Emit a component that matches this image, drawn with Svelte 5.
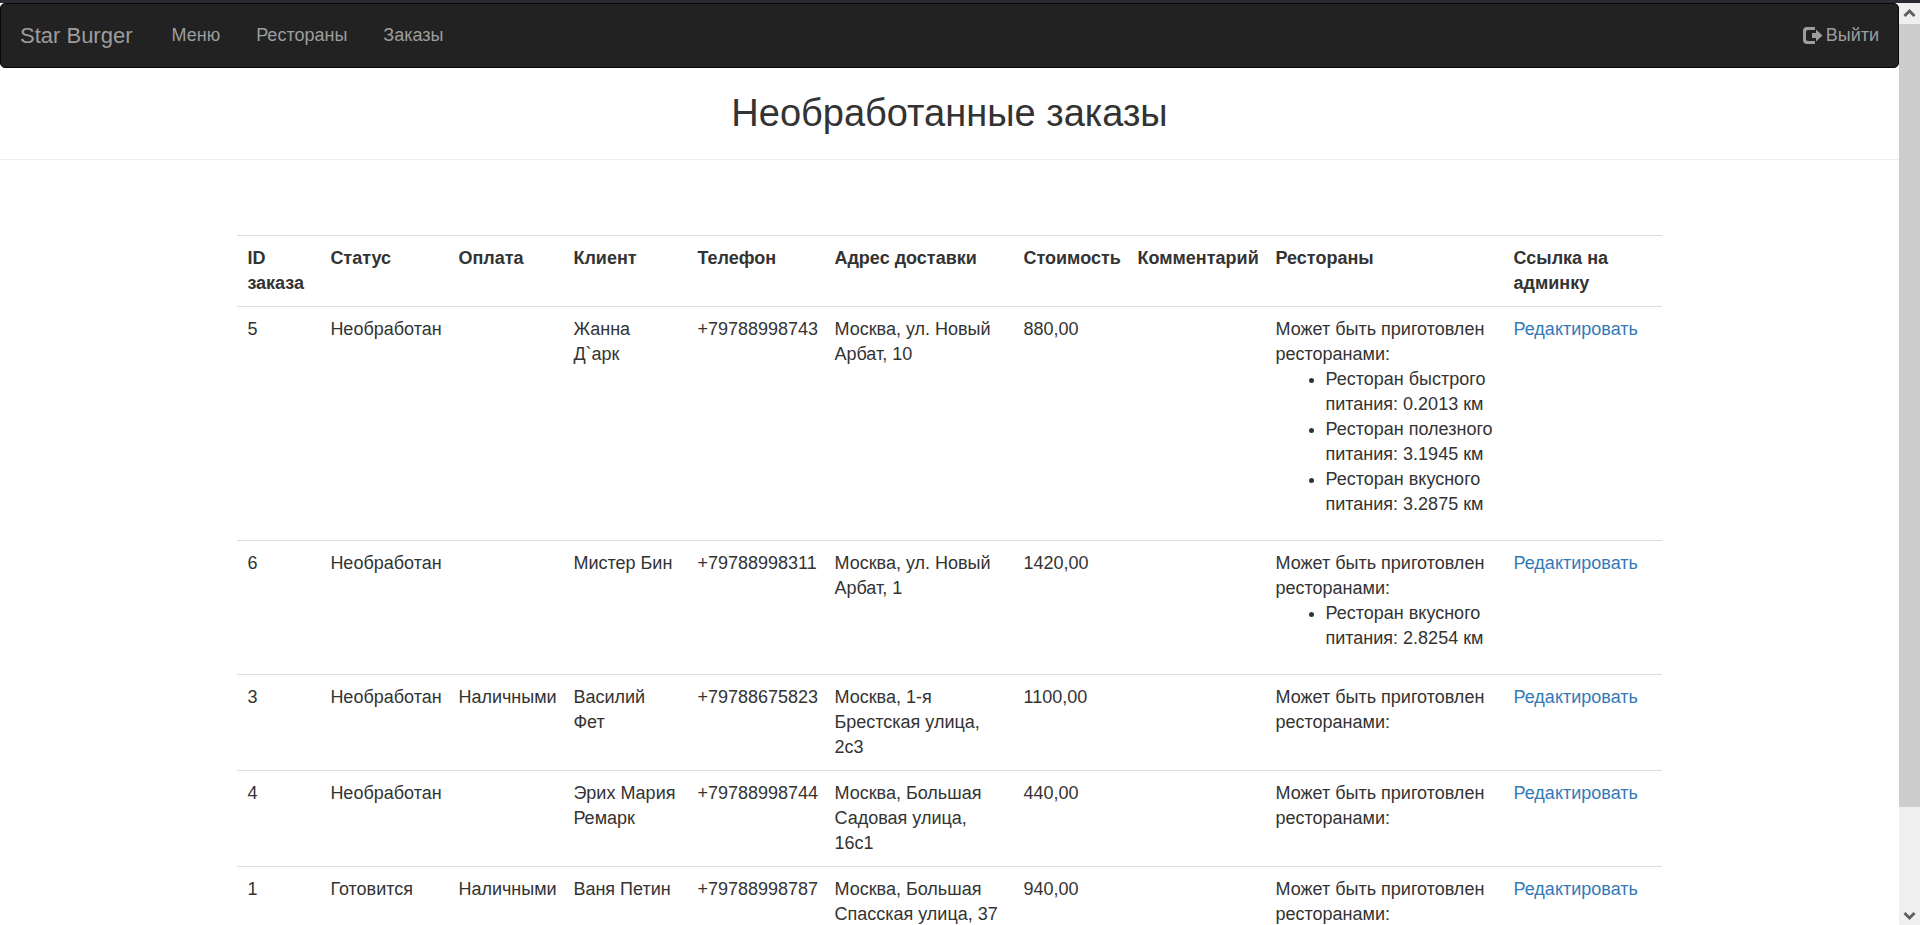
<script>
  const menu = ['Меню', 'Рестораны', 'Заказы'];

  const columns = [
    { title: 'ID заказа', width: 83 },
    { title: 'Статус', width: 128 },
    { title: 'Оплата', width: 115 },
    { title: 'Клиент', width: 124 },
    { title: 'Телефон', width: 137 },
    { title: 'Адрес доставки', width: 189 },
    { title: 'Стоимость', width: 114 },
    { title: 'Комментарий', width: 138 },
    { title: 'Рестораны', width: 238 },
    { title: 'Ссылка на админку', width: 158 }
  ];

  const orders = [
    {
      id: 5, status: 'Необработан', payment: '', client: 'Жанна Д`арк', phone: '+79788998743',
      address: 'Москва, ул. Новый Арбат, 10', cost: '880,00', comment: '',
      restaurants: [
        'Ресторан быстрого питания: 0.2013 км',
        'Ресторан полезного питания: 3.1945 км',
        'Ресторан вкусного питания: 3.2875 км'
      ]
    },
    {
      id: 6, status: 'Необработан', payment: '', client: 'Мистер Бин', phone: '+79788998311',
      address: 'Москва, ул. Новый Арбат, 1', cost: '1420,00', comment: '',
      restaurants: ['Ресторан вкусного питания: 2.8254 км']
    },
    {
      id: 3, status: 'Необработан', payment: 'Наличными', client: 'Василий Фет', phone: '+79788675823',
      address: 'Москва, 1-я Брестская улица, 2с3', cost: '1100,00', comment: '', restaurants: []
    },
    {
      id: 4, status: 'Необработан', payment: '', client: 'Эрих Мария Ремарк', phone: '+79788998744',
      address: 'Москва, Большая Садовая улица, 16с1', cost: '440,00', comment: '', restaurants: []
    },
    {
      id: 1, status: 'Готовится', payment: 'Наличными', client: 'Ваня Петин', phone: '+79788998787',
      address: 'Москва, Большая Спасская улица, 37', cost: '940,00', comment: '', restaurants: []
    }
  ];
</script>

<div class="window">
  <div class="page">
    <nav class="navbar">
      <a class="brand" href="#home">Star Burger</a>
      <ul class="menu">
        {#each menu as item}
          <li><a href="#menu">{item}</a></li>
        {/each}
      </ul>
      <a class="logout" href="#logout">
        <svg class="icon" viewBox="0 0 20 18" aria-hidden="true">
          <path d="M12 0V3H5Q3 3 3 5V12Q3 14 5 14H12V17H4Q0 17 0 13V4Q0 0 4 0Z" fill="currentColor" />
          <path d="M9 6H13V2.500L19.500 8.500L13 14.500V11H9Z" fill="currentColor" />
        </svg>
        <span>Выйти</span>
      </a>
    </nav>

    <h1>Необработанные заказы</h1>

    <main>
      <table>
        <colgroup>
          {#each columns as column}
            <col style:width="{column.width}px" />
          {/each}
        </colgroup>
        <thead>
          <tr>
            {#each columns as column}
              <th scope="col">{column.title}</th>
            {/each}
          </tr>
        </thead>
        <tbody>
          {#each orders as order}
            <tr>
              <td>{order.id}</td>
              <td>{order.status}</td>
              <td>{order.payment}</td>
              <td>{order.client}</td>
              <td>{order.phone}</td>
              <td>{order.address}</td>
              <td>{order.cost}</td>
              <td>{order.comment}</td>
              <td>
                Может быть приготовлен ресторанами:
                {#if order.restaurants.length}
                  <ul class="restaurants">
                    {#each order.restaurants as restaurant}
                      <li>{restaurant}</li>
                    {/each}
                  </ul>
                {/if}
              </td>
              <td><a href="#edit">Редактировать</a></td>
            </tr>
          {/each}
        </tbody>
      </table>
    </main>
  </div>

  <div class="scrollbar" aria-hidden="true">
    <svg viewBox="0 0 21 21"><path d="M5.500 13L10.500 8L15.500 13" /></svg>
    <div class="track"><div class="thumb"></div></div>
    <svg viewBox="0 0 21 21"><path d="M5.500 9L10.500 14L15.500 9" /></svg>
  </div>
</div>

<style>
  .window {
    box-sizing: border-box;
    display: flex;
    height: 100vh;
    overflow: hidden;
    border-top: 3px solid #2b2a33;
    background: #fff;
    color: #333;
    font: 18px/25px "Liberation Sans", Arial, sans-serif;
  }

  .page {
    flex: 1;
    min-width: 0;
    overflow: hidden;
  }

  .navbar {
    display: flex;
    align-items: center;
    box-sizing: border-box;
    height: 65px;
    padding: 0 19px;
    border: 1px solid #080808;
    border-radius: 5px;
    background: #222;
  }

  .navbar a {
    color: #9d9d9d;
  }

  .brand {
    margin-right: 21px;
    font-size: 22px;
  }

  .menu {
    display: flex;
    flex: 1;
    margin: 0;
    padding: 0;
    list-style: none;
  }

  .menu a {
    padding: 0 18px;
  }

  .logout {
    display: flex;
    align-items: center;
    gap: 3px;
  }

  .icon {
    width: 20px;
    height: 18px;
  }

  a {
    color: #337ab7;
    text-decoration: none;
  }

  h1 {
    margin: 0;
    padding: 25px 0;
    border-bottom: 1px solid #eee;
    font-size: 38px;
    font-weight: 400;
    line-height: 41px;
    text-align: center;
  }

  main {
    width: 75%;
    margin: 75px auto 0;
  }

  table {
    width: 100%;
    table-layout: fixed;
    border-collapse: collapse;
  }

  th,
  td {
    padding: 10px;
    border-top: 1px solid #ddd;
    text-align: left;
    vertical-align: top;
  }

  .restaurants {
    margin: 0 0 13px;
    padding-left: 50px;
  }

  .scrollbar {
    display: flex;
    flex-direction: column;
    width: 21px;
    background: #f0f0f0;
  }

  .scrollbar svg {
    width: 21px;
    height: 21px;
    fill: none;
    stroke: #606060;
    stroke-width: 3;
  }

  .track {
    flex: 1;
  }

  .thumb {
    height: 89%;
    background: #cdcdcd;
  }
</style>
